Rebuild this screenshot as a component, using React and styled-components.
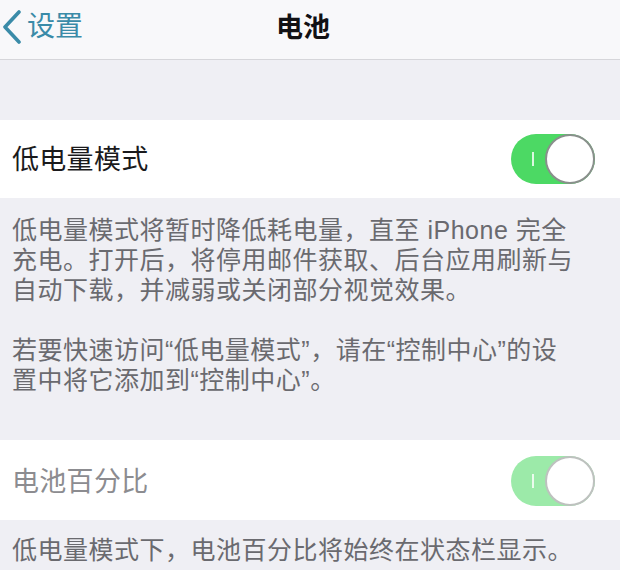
import React from "react";
import styled, { createGlobalStyle } from "styled-components";

const GlobalStyle = createGlobalStyle`
  html, body {
    margin: 0;
    padding: 0;
    background: #efeff4;
  }
  body {
    font-family: "Liberation Sans", "Noto Sans CJK SC", sans-serif;
    -webkit-font-smoothing: antialiased;
  }
`;

const Screen = styled.div`
  width: 620px;
  height: 570px;
  overflow: hidden;
  background: #efeff4;
  display: flex;
  flex-direction: column;
`;

const NavBar = styled.header`
  height: 59px;
  flex-shrink: 0;
  background: #f8f8fa;
  border-bottom: 1px solid #d6d6da;
  display: grid;
  grid-template-columns: 1fr auto 1fr;
  align-items: center;
  padding-right: 14px;
`;

const BackButton = styled.div`
  display: flex;
  align-items: center;
  gap: 4px;
  padding-left: 1px;
  color: #3a8ba8;
  font-size: 28px;
  line-height: 1;
  margin-top: -6px;
`;

const Title = styled.h1`
  margin: 0;
  margin-top: -2px;
  font-size: 27px;
  font-weight: 700;
  color: #111114;
  line-height: 1;
`;

const Spacer = styled.div`
  height: 60px;
  flex-shrink: 0;
`;

const Row = styled.div`
  height: ${(p) => p.$height}px;
  flex-shrink: 0;
  background: #fff;
  display: flex;
  align-items: center;
  justify-content: space-between;
  padding: 0 25px 0 12px;
`;

const Label = styled.span`
  font-size: 27px;
  line-height: 1;
  letter-spacing: 0.3px;
  color: ${(p) => (p.$disabled ? "#8c8c90" : "#1a1a1c")};
  margin-top: ${(p) => (p.$disabled ? "4px" : "3px")};
`;

const Toggle = styled.div`
  position: relative;
  width: 84px;
  height: 50px;
  border-radius: 25px;
  background: #4cd964;
  opacity: ${(p) => (p.$disabled ? 0.55 : 1)};
  filter: blur(0.6px);
  margin-top: ${(p) => (p.$disabled ? "2px" : "0")};
`;

const OnMark = styled.span`
  position: absolute;
  left: 21px;
  top: 18px;
  width: 2px;
  height: 14px;
  background: rgba(255, 255, 255, 0.8);
`;

const Knob = styled.span`
  position: absolute;
  right: 0;
  top: 0;
  width: 50px;
  height: 50px;
  box-sizing: border-box;
  border-radius: 50%;
  background: #fff;
  border: 2px solid #8a8f8c;
`;

const Footer = styled.div`
  flex-shrink: 0;
  padding: ${(p) => p.$padding};
  display: flex;
  flex-direction: column;
  gap: 30px;
`;

const Note = styled.p`
  margin: 0;
  font-size: 25px;
  line-height: 30px;
  color: #6a6a6f;
  letter-spacing: 0.5px;
  white-space: nowrap;
`;

const Chevron = () => (
  <svg width="22" height="34" viewBox="0 0 22 34" aria-hidden="true">
    <path
      d="M18 2 L4 17 L18 32"
      fill="none"
      stroke="currentColor"
      strokeWidth="3.6"
      strokeLinecap="round"
      strokeLinejoin="round"
    />
  </svg>
);

const Switch = ({ disabled }) => (
  <Toggle $disabled={disabled}>
    <OnMark />
    <Knob />
  </Toggle>
);

export default function App() {
  return (
    <>
      <GlobalStyle />
      <Screen>
        <NavBar>
          <BackButton>
            <Chevron />
            <span>设置</span>
          </BackButton>
          <Title>电池</Title>
          <div />
        </NavBar>
        <Spacer />
        <Row $height={78}>
          <Label>低电量模式</Label>
          <Switch />
        </Row>
        <Footer $padding="17px 20px 45px 12px">
          <Note>
            低电量模式将暂时降低耗电量，直至 iPhone 完全
            <br />
            充电。打开后，将停用邮件获取、后台应用刷新与
            <br />
            自动下载，并减弱或关闭部分视觉效果。
          </Note>
          <Note>
            若要快速访问“低电量模式”，请在“控制中心”的设
            <br />
            置中将它添加到“控制中心”。
          </Note>
        </Footer>
        <Row $height={80}>
          <Label $disabled>电池百分比</Label>
          <Switch disabled />
        </Row>
        <Footer $padding="15px 20px 0 12px">
          <Note>低电量模式下，电池百分比将始终在状态栏显示。</Note>
        </Footer>
      </Screen>
    </>
  );
}
